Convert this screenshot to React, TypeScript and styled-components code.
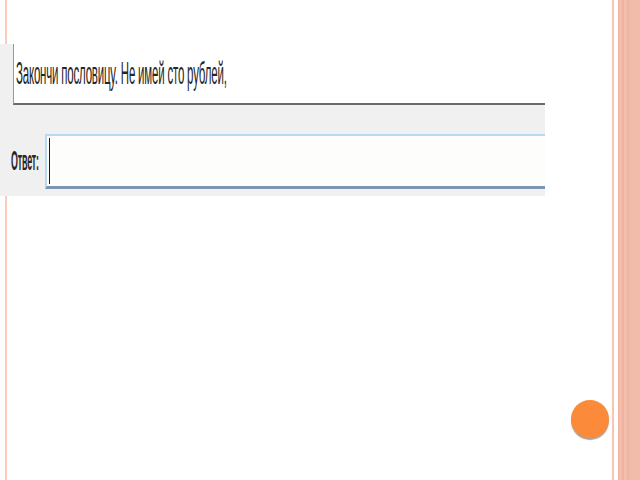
import React from 'react';
import styled, { createGlobalStyle } from 'styled-components';

// ============================================
// GLOBAL
// ============================================

const GlobalStyle = createGlobalStyle`
  html, body {
    margin: 0;
    padding: 0;
    background: #ffffff;
  }
  body {
    font-family: "Liberation Sans", Arial, sans-serif;
  }
`;

// ============================================
// SLIDE FRAME
// ============================================

const Slide = styled.div`
  display: flex;
  width: 640px;
  height: 480px;
  overflow: hidden;
  background-color: #ffffff;
  background-image: linear-gradient(#fbcdb8, #fbcdb8);
  background-size: 2px 100%;
  background-position: 5px 0;
  background-repeat: no-repeat;
`;

const Content = styled.div`
  flex: 1;
  display: flex;
  flex-direction: column;
  padding-top: 44px;
`;

const RightBorder = styled.div`
  width: 28px;
  display: flex;
`;

const BorderLine = styled.div<{ $width: number; $color: string }>`
  width: ${(p) => p.$width}px;
  background: ${(p) => p.$color};
`;

const Band = styled.div`
  flex: 1;
  background: linear-gradient(
    to right,
    #eeb09c 0px,
    #f2bcaa 1px,
    #f2bcaa 4px,
    #eaa894 5px,
    #f3c0ae 6px,
    #f3c0ae 9px,
    #eba996 10px,
    #f2bcaa 11px,
    #f2bcaa 100%
  );
`;

// ============================================
// SCREENSHOT PANEL
// ============================================

const Panel = styled.div`
  width: 545px;
  height: 152px;
  background: #f0f0f0;
  display: flex;
  flex-direction: column;
`;

const QuestionBox = styled.div`
  margin-left: 13px;
  height: 59px;
  background: #ffffff;
  border-left: 1px solid #9a9a9a;
  border-bottom: 2px solid #6a6a6a;
  display: flex;
  align-items: center;
  padding-left: 2px;
  overflow: hidden;
`;

const Squeezed = styled.span<{ $scale: number; $size: number; $weight: number }>`
  display: inline-block;
  white-space: nowrap;
  font-size: ${(p) => p.$size}px;
  font-weight: ${(p) => p.$weight};
  color: #262626;
  transform: scaleX(${(p) => p.$scale});
  transform-origin: left center;
  letter-spacing: -0.5px;
`;

const AnswerRow = styled.div`
  flex: 1;
  display: flex;
  align-items: flex-end;
  padding-bottom: 7px;
`;

const LabelBox = styled.div`
  width: 45px;
  height: 55px;
  display: flex;
  align-items: center;
  padding-left: 11px;
  box-sizing: border-box;
  overflow: visible;
`;

const InputBox = styled.div`
  flex: 1;
  height: 55px;
  box-sizing: border-box;
  background: #fdfefb;
  border-top: 2px solid #b9d9ef;
  border-left: 2px solid #b9d9ef;
  border-bottom: 3px solid #7b95b4;
  display: flex;
  align-items: center;
  padding-left: 2px;
`;

const Caret = styled.div`
  width: 1px;
  height: 46px;
  background: #1a1a1a;
`;

// ============================================
// DECORATION
// ============================================

const Dot = styled.div`
  align-self: flex-end;
  margin-top: auto;
  margin-right: 3px;
  margin-bottom: 42px;
  width: 38px;
  height: 38px;
  border-radius: 50%;
  background: #fb8a3a;
  box-shadow: 0 2px 1px rgba(120, 80, 60, 0.55);
`;

export default function App() {
  return (
    <>
      <GlobalStyle />
      <Slide>
        <Content>
          <Panel>
            <QuestionBox>
              <Squeezed $size={31} $scale={0.37} $weight={400}>
                Закончи пословицу. Не имей сто рублей,
              </Squeezed>
            </QuestionBox>
            <AnswerRow>
              <LabelBox>
                <Squeezed $size={27} $scale={0.33} $weight={700}>
                  Ответ:
                </Squeezed>
              </LabelBox>
              <InputBox>
                <Caret />
              </InputBox>
            </AnswerRow>
          </Panel>
          <Dot />
        </Content>
        <RightBorder>
          <BorderLine $width={2} $color="#f6c6b5" />
          <BorderLine $width={4} $color="#ffffff" />
          <Band />
        </RightBorder>
      </Slide>
    </>
  );
}
